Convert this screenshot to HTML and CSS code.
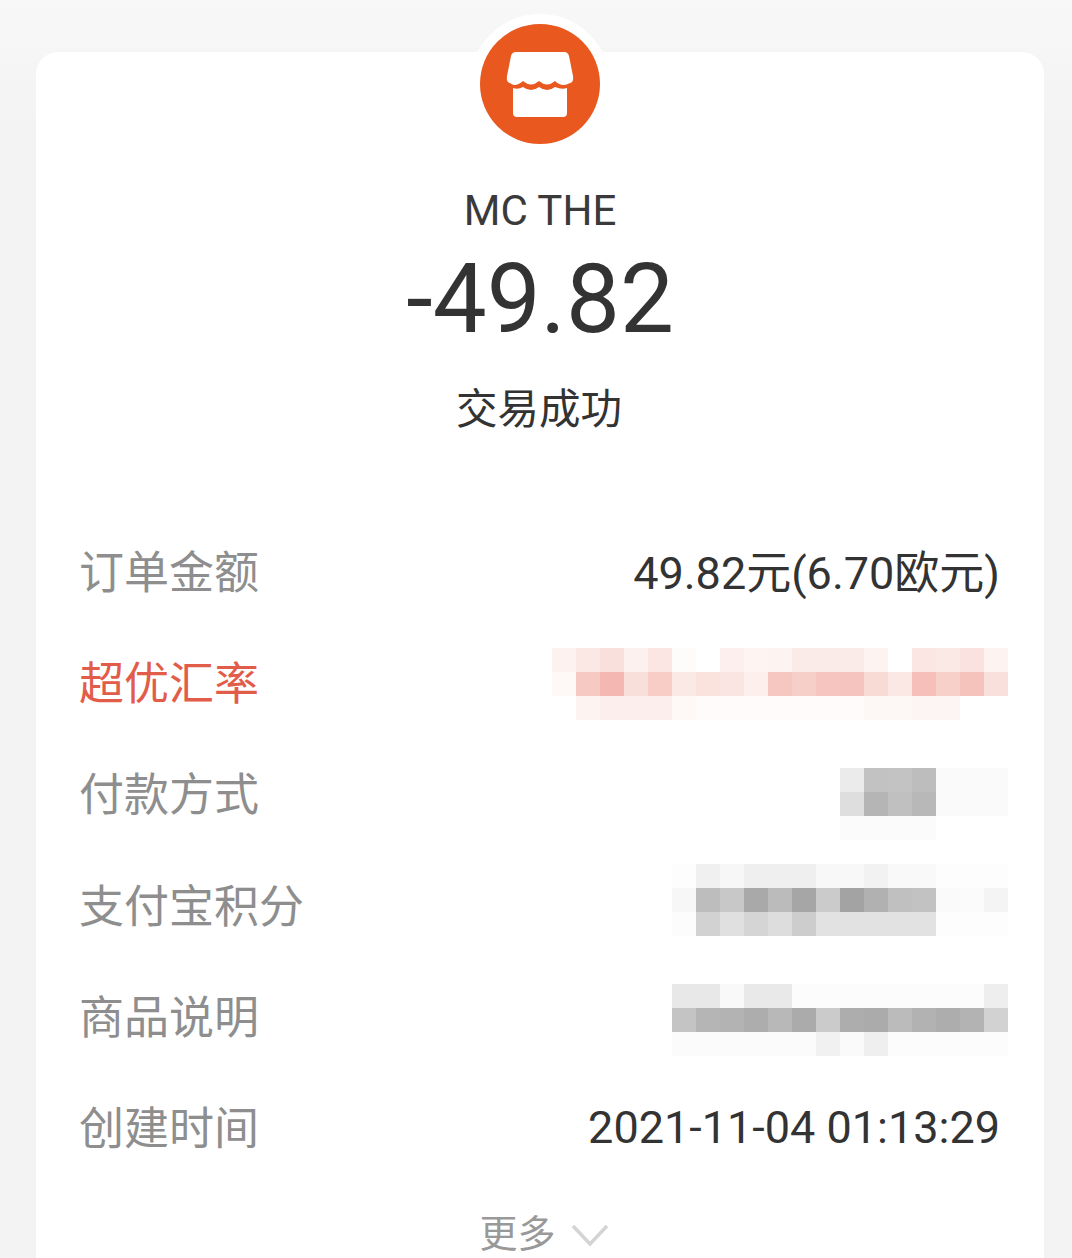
FILE: index.html
```html
<!DOCTYPE html>
<html lang="zh-CN">
<head>
    <meta charset="UTF-8">
    <meta name="viewport" content="width=device-width, initial-scale=1.0">
    <title>账单详情</title>
    <link rel="stylesheet" href="styles.css">
</head>
<body>
    <div class="card">
        <div class="avatar">
            <svg width="120" height="120" viewBox="0 0 120 120">
                <circle cx="60" cy="60" r="60" fill="#e8581f"/>
                <path fill="#fff" d="M36 28H84Q88 28 89 32L93 52Q94 58 90 59Q82 64 75 57Q67 64 59 57Q51 64 43 57Q35 64 30 59Q26 58 27 52L31 32Q32 28 36 28Z"/>
                <path fill="#fff" d="M33 64Q38 66 43 63Q51 69 59 63Q67 69 75 63Q82 66 87 64V89Q87 93 83 93H37Q33 93 33 89Z"/>
            </svg>
        </div>
        <div class="shop">MC THE</div>
        <div class="amount">-49.82</div>
        <div class="status">交易成功</div>

        <div class="rows">
            <div class="row">
                <span class="label">订单金额</span>
                <span class="value">49.82元(6.70欧元)</span>
            </div>
            <div class="row">
                <span class="label red">超优汇率</span>
                <svg class="mosaic rate" width="456" height="72" viewBox="0 0 19 3" shape-rendering="crispEdges">
                    <rect x="0" y="0" width="1" height="1" fill="#fdf2f0"/><rect x="1" y="0" width="1" height="1" fill="#fbe8e5"/><rect x="2" y="0" width="1" height="1" fill="#fae0dc"/><rect x="3" y="0" width="1" height="1" fill="#fdf1ef"/><rect x="4" y="0" width="1" height="1" fill="#fbe6e3"/><rect x="5" y="0" width="1" height="1" fill="#fefcfb"/><rect x="7" y="0" width="1" height="1" fill="#fcefed"/><rect x="8" y="0" width="1" height="1" fill="#fef5f3"/><rect x="9" y="0" width="1" height="1" fill="#fdf3f1"/><rect x="10" y="0" width="3" height="1" fill="#fbebe8"/><rect x="13" y="0" width="1" height="1" fill="#fdf4f1"/><rect x="15" y="0" width="1" height="1" fill="#fbe6e3"/><rect x="16" y="0" width="1" height="1" fill="#fbe9e6"/><rect x="17" y="0" width="1" height="1" fill="#f9e2df"/><rect x="18" y="0" width="1" height="1" fill="#fdf3f1"/>
                    <rect x="0" y="1" width="1" height="1" fill="#fef8f7"/><rect x="1" y="1" width="1" height="1" fill="#f6c9c2"/><rect x="2" y="1" width="1" height="1" fill="#f5b7b1"/><rect x="3" y="1" width="1" height="1" fill="#f9dfd9"/><rect x="4" y="1" width="1" height="1" fill="#f7cdc6"/><rect x="5" y="1" width="1" height="1" fill="#fbe9e6"/><rect x="6" y="1" width="1" height="1" fill="#fae2dd"/><rect x="7" y="1" width="1" height="1" fill="#fbe5e2"/><rect x="8" y="1" width="1" height="1" fill="#fcefec"/><rect x="9" y="1" width="1" height="1" fill="#f6c6c0"/><rect x="10" y="1" width="1" height="1" fill="#f7cfc9"/><rect x="11" y="1" width="1" height="1" fill="#f6c5bf"/><rect x="12" y="1" width="1" height="1" fill="#f6c4be"/><rect x="13" y="1" width="1" height="1" fill="#f9dbd5"/><rect x="14" y="1" width="1" height="1" fill="#fbe8e5"/><rect x="15" y="1" width="1" height="1" fill="#f6bfb9"/><rect x="16" y="1" width="1" height="1" fill="#f7d0ca"/><rect x="17" y="1" width="1" height="1" fill="#f6c2bc"/><rect x="18" y="1" width="1" height="1" fill="#f9e0dc"/>
                    <rect x="1" y="2" width="1" height="1" fill="#fdf3f1"/><rect x="2" y="2" width="3" height="1" fill="#fceeec"/><rect x="5" y="2" width="1" height="1" fill="#fef8f7"/><rect x="6" y="2" width="7" height="1" fill="#fefbfa"/><rect x="13" y="2" width="2" height="1" fill="#fdf7f5"/><rect x="15" y="2" width="2" height="1" fill="#fdf5f3"/>
                </svg>
            </div>
            <div class="row">
                <span class="label">付款方式</span>
                <svg class="mosaic pay" width="168" height="72" viewBox="0 0 7 3" shape-rendering="crispEdges">
                    <rect x="0" y="0" width="1" height="1" fill="#ebebeb"/><rect x="1" y="0" width="1" height="1" fill="#c2c2c2"/><rect x="2" y="0" width="1" height="1" fill="#c3c3c3"/><rect x="3" y="0" width="1" height="1" fill="#bdbdbd"/><rect x="4" y="0" width="3" height="1" fill="#fafafa"/>
                    <rect x="0" y="1" width="1" height="1" fill="#dedede"/><rect x="1" y="1" width="1" height="1" fill="#b5b5b5"/><rect x="2" y="1" width="1" height="1" fill="#c0c0c0"/><rect x="3" y="1" width="1" height="1" fill="#b8b8b8"/><rect x="4" y="1" width="3" height="1" fill="#fafafa"/>
                    <rect x="0" y="2" width="4" height="1" fill="#fbfbfb"/>
                </svg>
            </div>
            <div class="row">
                <span class="label">支付宝积分</span>
                <svg class="mosaic points" width="336" height="72" viewBox="0 0 14 3" shape-rendering="crispEdges">
                    <rect x="0" y="0" width="1" height="1" fill="#fdfdfd"/><rect x="1" y="0" width="1" height="1" fill="#f0f0f0"/><rect x="2" y="0" width="1" height="1" fill="#f7f7f7"/><rect x="3" y="0" width="3" height="1" fill="#efefef"/><rect x="6" y="0" width="2" height="1" fill="#f8f8f8"/><rect x="8" y="0" width="1" height="1" fill="#f2f2f2"/><rect x="9" y="0" width="2" height="1" fill="#f9f9f9"/><rect x="11" y="0" width="3" height="1" fill="#fdfdfd"/>
                    <rect x="0" y="1" width="1" height="1" fill="#f7f7f7"/><rect x="1" y="1" width="1" height="1" fill="#bdbdbd"/><rect x="2" y="1" width="1" height="1" fill="#c8c8c8"/><rect x="3" y="1" width="1" height="1" fill="#a9a9a9"/><rect x="4" y="1" width="1" height="1" fill="#bbbbbb"/><rect x="5" y="1" width="1" height="1" fill="#a6a6a6"/><rect x="6" y="1" width="1" height="1" fill="#cbcbcb"/><rect x="7" y="1" width="1" height="1" fill="#a3a3a3"/><rect x="8" y="1" width="1" height="1" fill="#b1b1b1"/><rect x="9" y="1" width="1" height="1" fill="#c0c0c0"/><rect x="10" y="1" width="1" height="1" fill="#c2c2c2"/><rect x="11" y="1" width="1" height="1" fill="#fafafa"/><rect x="12" y="1" width="1" height="1" fill="#fbfbfb"/><rect x="13" y="1" width="1" height="1" fill="#f4f4f4"/>
                    <rect x="0" y="2" width="1" height="1" fill="#fcfcfc"/><rect x="1" y="2" width="1" height="1" fill="#d2d2d2"/><rect x="2" y="2" width="1" height="1" fill="#e0e0e0"/><rect x="3" y="2" width="1" height="1" fill="#d5d5d5"/><rect x="4" y="2" width="1" height="1" fill="#dddddd"/><rect x="5" y="2" width="1" height="1" fill="#cdcdcd"/><rect x="6" y="2" width="5" height="1" fill="#e2e2e2"/><rect x="11" y="2" width="3" height="1" fill="#fdfdfd"/>
                </svg>
            </div>
            <div class="row">
                <span class="label">商品说明</span>
                <svg class="mosaic goods" width="336" height="72" viewBox="0 0 14 3" shape-rendering="crispEdges">
                    <rect x="0" y="0" width="2" height="1" fill="#e8e8e8"/><rect x="2" y="0" width="1" height="1" fill="#f9f9f9"/><rect x="3" y="0" width="2" height="1" fill="#e9e9e9"/><rect x="5" y="0" width="8" height="1" fill="#fcfcfc"/><rect x="13" y="0" width="1" height="1" fill="#eeeeee"/>
                    <rect x="0" y="1" width="1" height="1" fill="#c4c4c4"/><rect x="1" y="1" width="1" height="1" fill="#b5b5b5"/><rect x="2" y="1" width="1" height="1" fill="#b3b3b3"/><rect x="3" y="1" width="1" height="1" fill="#adadad"/><rect x="4" y="1" width="1" height="1" fill="#b8b8b8"/><rect x="5" y="1" width="1" height="1" fill="#ababab"/><rect x="6" y="1" width="1" height="1" fill="#cbcbcb"/><rect x="7" y="1" width="1" height="1" fill="#adadad"/><rect x="8" y="1" width="1" height="1" fill="#ababab"/><rect x="9" y="1" width="1" height="1" fill="#bbbbbb"/><rect x="10" y="1" width="1" height="1" fill="#b2b2b2"/><rect x="11" y="1" width="1" height="1" fill="#adadad"/><rect x="12" y="1" width="1" height="1" fill="#b3b3b3"/><rect x="13" y="1" width="1" height="1" fill="#d2d2d2"/>
                    <rect x="0" y="2" width="6" height="1" fill="#fbfbfb"/><rect x="6" y="2" width="1" height="1" fill="#f1f1f1"/><rect x="7" y="2" width="1" height="1" fill="#fafafa"/><rect x="8" y="2" width="1" height="1" fill="#efefef"/><rect x="9" y="2" width="5" height="1" fill="#fcfcfc"/>
                </svg>
            </div>
            <div class="row">
                <span class="label">创建时间</span>
                <span class="value time">2021-11-04 01:13:29</span>
            </div>
        </div>

        <div class="more">
            <span>更多</span>
            <svg width="38" height="24" viewBox="0 0 38 24">
                <path d="M2 3L19 21L36 3" fill="none" stroke="#d4d4d4" stroke-width="3.5"/>
            </svg>
        </div>
    </div>
</body>
</html>
```

FILE: styles.css
```css
html, body {
    height: 100%;
}
body {
    margin: 0;
    overflow: hidden;
    background: linear-gradient(#f8f8f8, #f3f3f3 120px);
    font-family: "Noto Sans CJK SC", Roboto, sans-serif;
}
.card {
    display: flow-root;
    box-sizing: border-box;
    height: 1206px;
    margin: 52px 28px 0 36px;
    padding: 0 44px 0 44px;
    background: #fff;
    border-radius: 22px 22px 0 0;
    text-align: center;
}
.avatar {
    width: 120px;
    height: 120px;
    margin: -28px auto 0;
    border-radius: 50%;
    box-shadow: 0 0 0 10px #fff;
}
.avatar svg {
    display: block;
}
.shop {
    margin-top: 42px;
    height: 50px;
    line-height: 50px;
    font-family: Roboto, sans-serif;
    font-size: 42px;
    color: #3a3a3a;
}
.amount {
    margin-top: 10px;
    height: 106px;
    line-height: 106px;
    font-family: Roboto, sans-serif;
    font-size: 96px;
    color: #333;
}
.status {
    margin-top: 24px;
    padding-right: 2px;
    height: 60px;
    line-height: 60px;
    font-size: 41.5px;
    color: #333;
}
.rows {
    margin-top: 78px;
}
.row {
    display: flex;
    justify-content: space-between;
    align-items: center;
    height: 111.2px;
}
.label {
    margin-left: -1px;
    font-size: 45px;
    color: #8e8e8e;
}
.label.red {
    color: #e25c4a;
}
.value {
    font-family: Roboto, "Noto Sans CJK SC", sans-serif;
    font-size: 45px;
    color: #333;
}
.value.time {
    margin-top: 3px;
}
/* blurred values sit a little off the row centre */
.mosaic {
    display: block;
    margin-right: -8px;
}
.mosaic.rate {
    margin-top: 6px;
}
.mosaic.pay {
    margin-top: 24px;
}
.mosaic.points {
    margin-top: -6px;
}
.mosaic.goods {
    margin-top: 12px;
}
.more {
    display: flex;
    justify-content: center;
    align-items: center;
    gap: 15px;
    margin-top: 28px;
    padding-left: 8px;
    line-height: 44px;
    font-size: 38px;
    color: #999;
}
.more svg {
    margin-top: 8px;
}
```
